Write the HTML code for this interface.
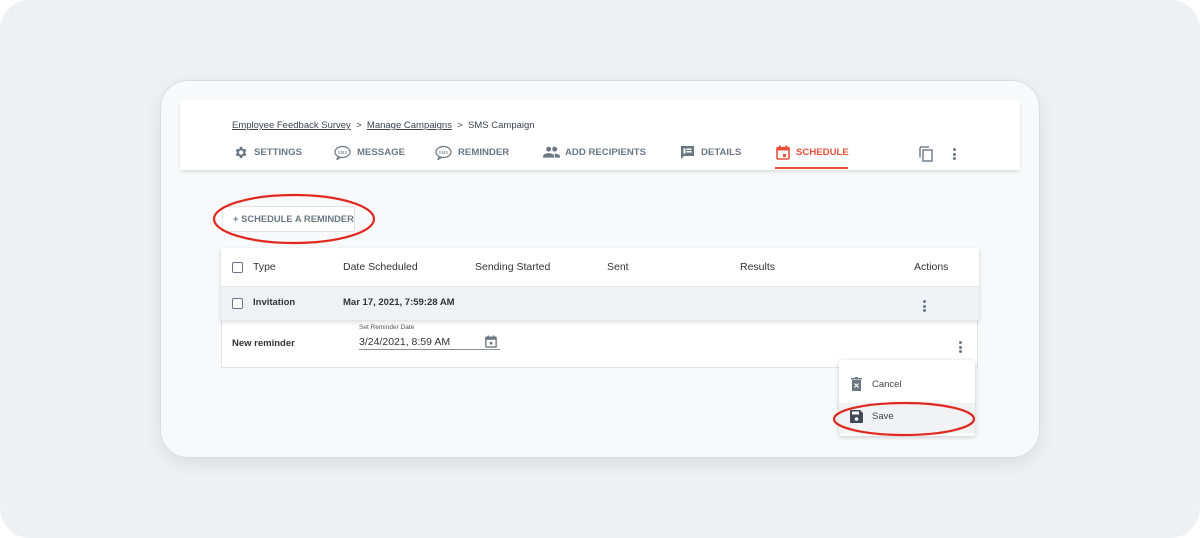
<!DOCTYPE html>
<html><head><style>
*{margin:0;padding:0;box-sizing:border-box}
body{width:1200px;height:538px;background:#fff;font-family:"Liberation Sans",sans-serif;position:relative;overflow:hidden}
.bg{position:absolute;left:0;top:0;width:1200px;height:538px;background:#eff0f3;border-radius:30px}
.card{position:absolute;left:160px;top:80px;width:880px;height:378px;background:#f8f9fa;border:1px solid #dcdde0;border-radius:28px;box-shadow:0 6px 18px rgba(0,0,0,.08)}
.hdr{position:absolute;left:180px;top:100px;width:840px;height:70px;background:#fff;box-shadow:0 2px 3px rgba(0,0,0,.1)}
.t{position:absolute;white-space:nowrap}
.bc{font-size:9.5px;color:#3c4550;top:120px}
.bc u{text-decoration:underline}
.tab{font-size:9.6px;font-weight:bold;color:#6b7884;top:147px}
.ic{position:absolute}
.btn{position:absolute;left:222px;top:206px;width:133px;height:26px;background:#fff;border:1px solid #e3e3e3;font-size:9.4px;font-weight:bold;color:#6b7884;line-height:24px;padding-left:10px;white-space:nowrap}
.tbl{position:absolute;left:221px;top:248px;width:757px;height:120px;background:#fff;border:1px solid #e3e3e3}
.th{position:absolute;left:221px;top:248px;width:758px;height:72px;box-shadow:0 2px 5px rgba(0,0,0,.15)}
.row2{position:absolute;left:221px;top:286px;width:758px;height:34px;background:#eef2f4;border-top:1px solid #e3e6e8}
.cell{font-size:10.5px;color:#333}
.cb{position:absolute;width:11px;height:11px;border:1.5px solid #6b7280;border-radius:2px;background:#fff}
.menu{position:absolute;left:839px;top:360px;width:136px;height:76px;background:#fff;box-shadow:0 1px 5px rgba(0,0,0,.2);border-radius:3px}
.dots{position:absolute;width:3px}
.dots i{display:block;width:3px;height:3px;border-radius:50%;background:#6b7884;margin-bottom:1.5px}
</style></head><body>
<div class="bg"></div>
<div class="card"></div>
<div class="hdr"></div>
<div class="t bc" style="left:232px"><u>Employee Feedback Survey</u> &nbsp;&gt;&nbsp; <u>Manage Campaigns</u> &nbsp;&gt;&nbsp; SMS Campaign</div>

<svg class="ic" style="left:233px;top:145px" width="15" height="15" viewBox="0 0 24 24"><path fill="#6b7884" d="M19.4 13a7.5 7.5 0 0 0 0-2l2.1-1.6-2-3.5-2.5 1a7 7 0 0 0-1.7-1L14.9 3h-4l-.4 2.9a7 7 0 0 0-1.7 1l-2.5-1-2 3.5L6.4 11a7.5 7.5 0 0 0 0 2l-2.1 1.6 2 3.5 2.5-1a7 7 0 0 0 1.7 1l.4 2.9h4l.4-2.9a7 7 0 0 0 1.7-1l2.5 1 2-3.5zM12.9 15.5a3.5 3.5 0 1 1 0-7 3.5 3.5 0 0 1 0 7z"/></svg>
<div class="t tab" style="left:254px">SETTINGS</div>
<svg class="ic" style="left:334px;top:145px" width="17" height="15" viewBox="0 0 17 15"><ellipse cx="8.5" cy="7" rx="7.5" ry="5.5" fill="none" stroke="#6b7884" stroke-width="1.2"/><path d="M4 12l-1 2.5 3-1.8" fill="none" stroke="#6b7884" stroke-width="1.2"/><text x="8.5" y="9" font-size="4.5" text-anchor="middle" fill="#6b7884" font-family="Liberation Sans">SMS</text></svg>
<div class="t tab" style="left:357px">MESSAGE</div>
<svg class="ic" style="left:435px;top:145px" width="17" height="15" viewBox="0 0 17 15"><ellipse cx="8.5" cy="7" rx="7.5" ry="5.5" fill="none" stroke="#6b7884" stroke-width="1.2"/><path d="M4 12l-1 2.5 3-1.8" fill="none" stroke="#6b7884" stroke-width="1.2"/><text x="8.5" y="9" font-size="4.5" text-anchor="middle" fill="#6b7884" font-family="Liberation Sans">SMS</text></svg>
<div class="t tab" style="left:458px">REMINDER</div>
<svg class="ic" style="left:543px;top:146px" width="17" height="12" viewBox="0 0 24 16"><circle cx="8" cy="4" r="3.5" fill="#6b7884"/><circle cx="16.5" cy="4" r="3.5" fill="#6b7884"/><path d="M0 16v-2c0-3 5-4.5 8-4.5s8 1.5 8 4.5v2zM17 16v-2c0-1.5-.7-2.8-2-3.8 4 .2 9 1.3 9 3.8v2z" fill="#6b7884"/></svg>
<div class="t tab" style="left:565px">ADD RECIPIENTS</div>
<svg class="ic" style="left:680px;top:145px" width="15" height="15" viewBox="0 0 15 15"><path d="M1 1h13v10H4l-3 3z" fill="#6b7884"/><rect x="3.5" y="3.5" width="2" height="5" fill="#fff"/><rect x="6.5" y="3.5" width="5" height="1.5" fill="#fff"/><rect x="6.5" y="6" width="5" height="1.5" fill="#fff"/></svg>
<div class="t tab" style="left:701px">DETAILS</div>
<svg class="ic" style="left:776px;top:145px" width="14" height="15" viewBox="0 0 14 15"><rect x="1" y="2.5" width="12" height="11.5" rx="1" fill="none" stroke="#e8503a" stroke-width="1.6"/><rect x="1" y="2.5" width="12" height="3" fill="#e8503a"/><rect x="3" y="0.5" width="1.6" height="3" fill="#e8503a"/><rect x="9.4" y="0.5" width="1.6" height="3" fill="#e8503a"/><rect x="7" y="9" width="3" height="3" fill="#e8503a"/></svg>
<div class="t tab" style="left:796px;color:#e8503a">SCHEDULE</div>
<div style="position:absolute;left:775px;top:167px;width:73px;height:2px;background:#e8503a"></div>
<svg class="ic" style="left:919px;top:146px" width="15" height="16" viewBox="0 0 15 16"><path d="M1 1.5v10" stroke="#6b7884" stroke-width="1.4"/><path d="M1 1h9" stroke="#6b7884" stroke-width="1.4"/><rect x="4" y="4" width="9" height="11" fill="none" stroke="#6b7884" stroke-width="1.4"/></svg>
<div class="dots" style="left:953px;top:148px"><i></i><i></i><i></i></div>

<div class="btn">+ SCHEDULE A REMINDER</div>

<div class="tbl"></div>
<div class="th"></div>
<div style="position:absolute;left:221px;top:248px;width:758px;height:38px;background:#fff"></div>
<div class="row2"></div>
<div class="cb" style="left:232px;top:262px"></div>
<div class="t cell" style="left:253px;top:261px">Type</div>
<div class="t cell" style="left:343px;top:261px">Date Scheduled</div>
<div class="t cell" style="left:475px;top:261px">Sending Started</div>
<div class="t cell" style="left:607px;top:261px">Sent</div>
<div class="t cell" style="left:740px;top:261px">Results</div>
<div class="t cell" style="left:914px;top:261px">Actions</div>
<div class="cb" style="left:232px;top:298px"></div>
<div class="t cell" style="left:253px;top:297px;font-weight:bold;font-size:9.5px">Invitation</div>
<div class="t cell" style="left:343px;top:297px;font-weight:bold;font-size:9.5px">Mar 17, 2021, 7:59:28 AM</div>
<div class="dots" style="left:923px;top:300px"><i></i><i></i><i></i></div>
<div class="t cell" style="left:232px;top:338px;font-size:9.5px;font-weight:bold;color:#333">New reminder</div>
<div class="t" style="left:359px;top:324px;font-size:6.5px;color:#555">Set Reminder Date</div>
<div class="t cell" style="left:359px;top:336px;font-size:10.5px">3/24/2021, 8:59 AM</div>
<div style="position:absolute;left:359px;top:349px;width:141px;height:1px;background:#8a939b"></div>
<svg class="ic" style="left:485px;top:335px" width="12" height="13" viewBox="0 0 14 15"><rect x="1" y="2.5" width="12" height="11.5" rx="1" fill="none" stroke="#6b7884" stroke-width="1.6"/><rect x="1" y="2.5" width="12" height="3" fill="#6b7884"/><rect x="3" y="0.5" width="1.6" height="3" fill="#6b7884"/><rect x="9.4" y="0.5" width="1.6" height="3" fill="#6b7884"/><rect x="5.5" y="8" width="3" height="3" fill="#6b7884"/></svg>
<div class="dots" style="left:959px;top:341px"><i></i><i></i><i></i></div>

<div class="menu"></div>
<div style="position:absolute;left:839px;top:403px;width:136px;height:30px;background:#f1f2f3"></div>
<svg class="ic" style="left:851px;top:377px" width="11" height="14" viewBox="0 0 11 14"><rect x="0" y="1" width="11" height="1.5" fill="#6b7884"/><rect x="4" y="0" width="3" height="1.5" fill="#6b7884"/><rect x="1" y="3" width="9" height="11" fill="#6b7884"/><path d="M3.5 6.5l4 4M7.5 6.5l-4 4" stroke="#fff" stroke-width="1.2"/></svg>
<div class="t" style="left:872px;top:379px;font-size:9.5px;color:#444">Cancel</div>
<svg class="ic" style="left:850px;top:410px" width="13" height="13" viewBox="0 0 13 13"><path d="M0 1a1 1 0 0 1 1-1h9l3 3v9a1 1 0 0 1-1 1H1a1 1 0 0 1-1-1z" fill="#3d4a56"/><rect x="2" y="1.5" width="7" height="3" fill="#fff"/><circle cx="6.5" cy="9" r="1.8" fill="#fff"/></svg>
<div class="t" style="left:872px;top:411px;font-size:9.5px;color:#444">Save</div>

<svg style="position:absolute;left:0;top:0" width="1200" height="538"><ellipse cx="294" cy="219" rx="80" ry="24" fill="none" stroke="#e0281f" stroke-width="2.2"/><ellipse cx="904" cy="419" rx="70" ry="16" fill="none" stroke="#e0281f" stroke-width="2.2"/></svg>
</body></html>
